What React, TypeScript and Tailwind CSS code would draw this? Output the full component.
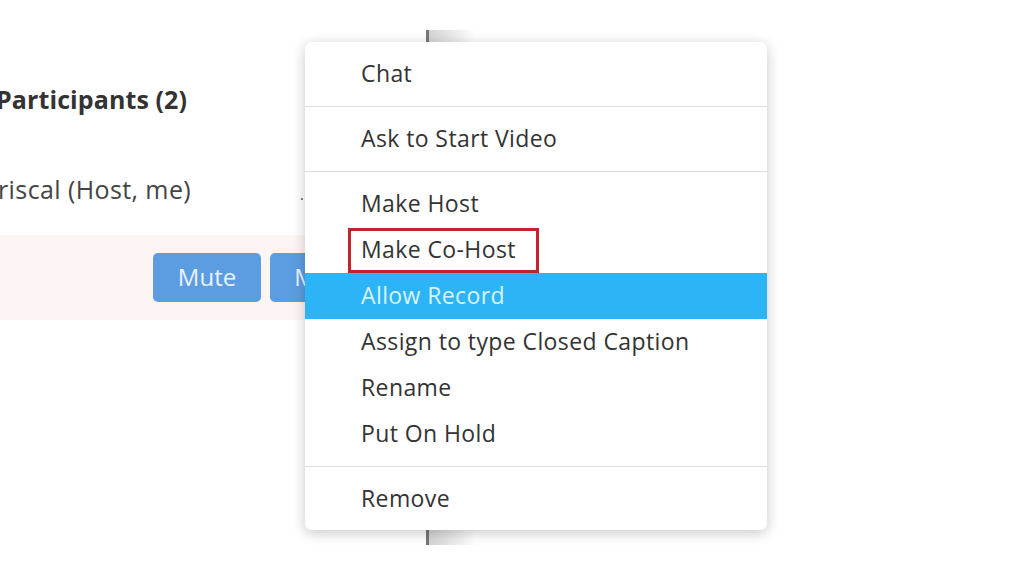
import React from "react";

const groups: string[][] = [
  ["Chat"],
  ["Ask to Start Video"],
  ["Make Host", "Make Co-Host", "Allow Record", "Assign to type Closed Caption", "Rename", "Put On Hold"],
  ["Remove"],
];

function MenuRow({ label }: { label: string }) {
  const active = label === "Allow Record";
  const boxed = label === "Make Co-Host";
  return (
    <div
      className={
        "h-[46px] flex items-center pl-[56px] pb-[1px] " +
        (active ? "bg-[#2cb4f7] text-[#d9f2ff]" : "text-[#333]")
      }
    >
      {boxed ? (
        <span className="-ml-[13px] mt-[1px] border-[3px] border-[#c4232e] px-[10px] h-[45px] w-[191px] flex items-center pb-[1px]">
          {label}
        </span>
      ) : (
        <span>{label}</span>
      )}
    </div>
  );
}

export default function App() {
  return (
    <div
      className="relative w-[1024px] h-[576px] bg-white overflow-hidden"
      style={{ fontFamily: '"Open Sans", "Noto Sans", sans-serif' }}
    >
      {/* participants panel behind */}
      <div className="flex h-full">
        <div className="w-[426px] pt-[80px] flex flex-col text-[25px]">
          <div className="font-bold text-[#333] -ml-[4px] leading-[38px] tracking-[0.1px]">Participants (2)</div>
          <div className="mt-[52px] text-[#444] -ml-[2px] leading-[38px] tracking-[0.4px] flex">
            <span>riscal (Host, me)</span>
            <span className="ml-auto mr-[122px] mt-[6px] text-[14px]">.</span>
          </div>
          <div className="mt-[21px] h-[85px] bg-[#fdf5f3] flex items-center">
            <span className="-ml-[6px] w-[6px] text-[#555] text-[22px]">:</span>
            <div className="ml-[153px] flex gap-[9px] text-[24px]">
              <div className="w-[108px] h-[49px] rounded-[5px] bg-[#5c9de2] text-[#eaf3ff] flex items-center justify-center pb-[2px]">
                Mute
              </div>
              <div className="w-[108px] h-[49px] rounded-[5px] bg-[#5c9de2] text-[#eaf3ff] flex items-center justify-center pb-[2px]">
                More
              </div>
            </div>
          </div>
        </div>
        <div className="mt-[30px] h-[515px] w-[3px] bg-[#777]" />
        <div className="mt-[30px] h-[515px] w-[46px] bg-gradient-to-r from-[#d4d4d4] to-white" />
      </div>

      {/* context menu */}
      <div className="absolute left-[305px] top-[42px] w-[462px] h-[488px] bg-white rounded-[7px] shadow-[0_3px_14px_rgba(0,0,0,0.22)] flex flex-col text-[23px] tracking-[0.4px]">
        {groups.map((g, i) => (
          <div
            key={i}
            className={"py-[9px] " + (i < groups.length - 1 ? "border-b border-[#dcdcdc]" : "")}
          >
            {g.map((label) => (
              <MenuRow key={label} label={label} />
            ))}
          </div>
        ))}
      </div>
    </div>
  );
}
